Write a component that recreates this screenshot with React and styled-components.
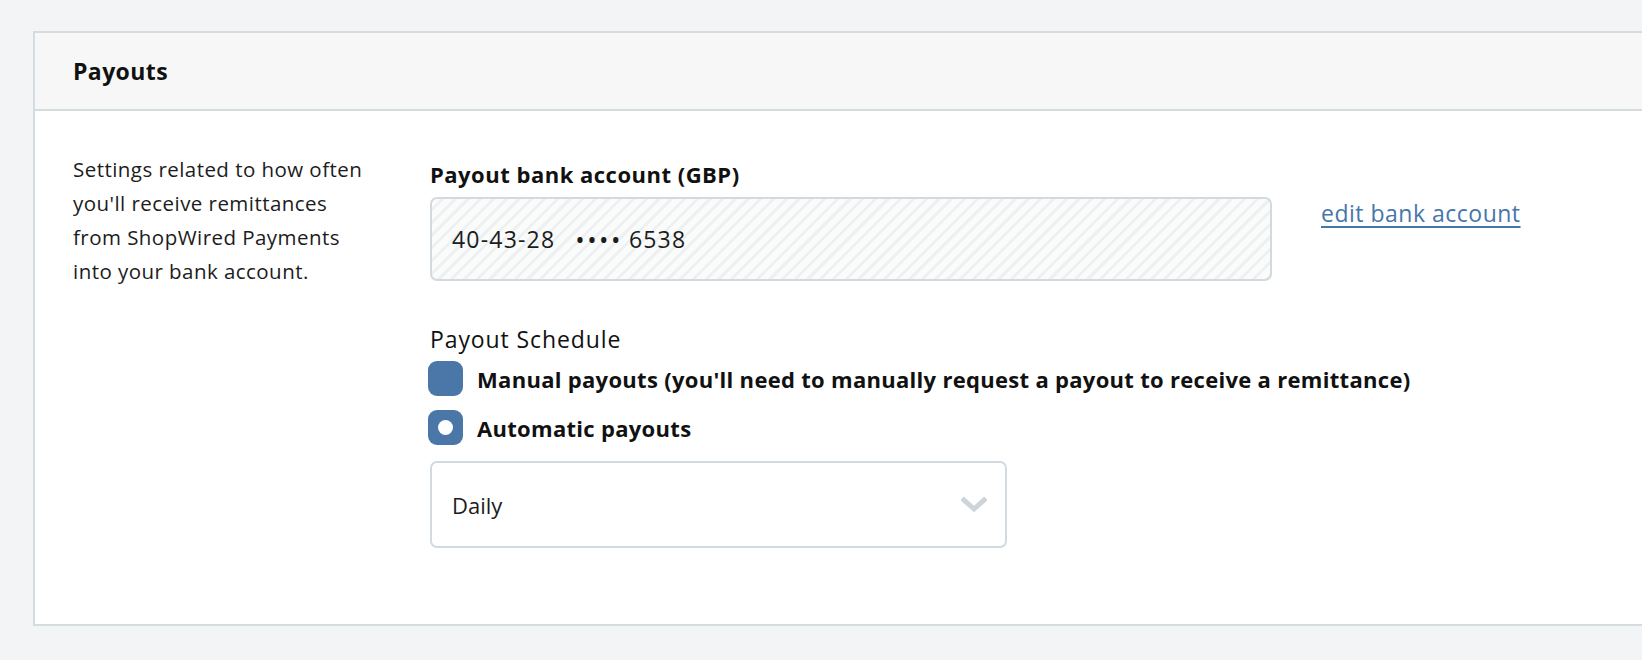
import React from "react";
import styled, { createGlobalStyle } from "styled-components";

const Global = createGlobalStyle`
  html, body { margin: 0; padding: 0; background: #f3f4f6; }
  body { font-family: "Open Sans", Lato, sans-serif; color: #1c1c1c; }
`;

const Page = styled.div`
  padding: 31px 0 0 33px;
  height: 660px;
  box-sizing: border-box;
  overflow: hidden;
`;

const Card = styled.section`
  border: 2px solid #d5dce0;
  border-right: none;
  background: #fff;
  box-sizing: border-box;
`;

const CardHeader = styled.header`
  height: 76px;
  background: #f7f7f7;
  border-bottom: 2px solid #d5dce0;
  display: flex;
  align-items: center;
  padding-left: 38px;
`;

const Title = styled.h2`
  margin: 0;
  font-size: 23px;
  font-weight: 700;
  letter-spacing: 0.4px;
  color: #111;
`;

const CardBody = styled.div`
  display: grid;
  grid-template-columns: 357px 1fr;
  padding: 41px 0 76px 38px;
`;

const Description = styled.p`
  margin: 0;
  width: 302px;
  font-size: 20.5px;
  letter-spacing: 0.45px;
  line-height: 34px;
  color: #1c1c1c;
`;

const Fields = styled.div`
  display: flex;
  flex-direction: column;
  padding-top: 10px;
`;

const Label = styled.div`
  font-size: ${(p) => (p.$bold ? 22 : 23)}px;
  font-weight: ${(p) => (p.$bold ? 700 : 500)};
  letter-spacing: ${(p) => (p.$bold ? 0.5 : 0.9)}px;
  line-height: 24px;
  color: #111;
  margin-bottom: ${(p) => p.$mb || 0}px;
`;

const BankRow = styled.div`
  display: flex;
  align-items: flex-start;
  gap: 49px;
  margin-bottom: 46px;
`;

const ReadOnlyBox = styled.div`
  width: 842px;
  height: 84px;
  box-sizing: border-box;
  border: 2px solid #d3dadf;
  border-radius: 7px;
  display: flex;
  align-items: center;
  padding-left: 20px;
  font-size: 23px;
  letter-spacing: 1.2px;
  color: #1c1c1c;
  background-color: #fafbfb;
  background-image: repeating-linear-gradient(
    135deg,
    #fafbfb 0px,
    #fafbfb 6px,
    #eef0f2 6px,
    #eef0f2 9px
  );
`;

const Dots = styled.span`
  margin: 0 6px 0 20px;
  font-size: 25px;
  letter-spacing: 2.5px;
`;

const EditLink = styled.a`
  margin-top: 4px;
  font-size: 23px;
  letter-spacing: 0.5px;
  line-height: 24px;
  color: #4676a9;
  text-decoration: underline;
  text-decoration-thickness: 2px;
  text-underline-offset: 4px;
  cursor: pointer;
`;

const RadioList = styled.div`
  display: flex;
  flex-direction: column;
  gap: 14px;
  margin-top: 10px;
`;

const RadioRow = styled.label`
  display: flex;
  align-items: center;
  gap: 14px;
  font-size: 22px;
  font-weight: 700;
  letter-spacing: 0.3px;
  color: #111;
`;

const RadioBox = styled.span`
  width: 35px;
  height: 35px;
  border-radius: 9px;
  background: #4a77a8;
  display: flex;
  align-items: center;
  justify-content: center;
  flex-shrink: 0;
  margin-left: -2px;
  &::after {
    content: "";
    display: ${(p) => (p.$checked ? "block" : "none")};
    width: 15px;
    height: 15px;
    border-radius: 50%;
    background: #fff;
  }
`;

const Select = styled.div`
  margin-top: 16px;
  width: 577px;
  height: 87px;
  box-sizing: border-box;
  border: 2px solid #d3dadf;
  border-radius: 7px;
  background: #fff;
  display: flex;
  align-items: center;
  justify-content: space-between;
  padding: 0 18px 0 20px;
  font-size: 22px;
  color: #1c1c1c;
`;

const Chevron = () => (
  <svg width="26" height="18" viewBox="0 0 26 18" aria-hidden="true">
    <path d="M3 4 L13 13 L23 4" fill="none" stroke="#cdd5da" strokeWidth="5" strokeLinecap="square" />
  </svg>
);

export default function App() {
  return (
    <>
      <Global />
      <Page>
        <Card>
          <CardHeader>
            <Title>Payouts</Title>
          </CardHeader>
          <CardBody>
            <Description>
              Settings related to how often you'll receive remittances from ShopWired Payments into your bank account.
            </Description>
            <Fields>
              <Label $bold $mb={11}>Payout bank account (GBP)</Label>
              <BankRow>
                <ReadOnlyBox>
                  40-43-28<Dots>••••</Dots>6538
                </ReadOnlyBox>
                <EditLink>edit bank account</EditLink>
              </BankRow>
              <Label>Payout Schedule</Label>
              <RadioList>
                <RadioRow>
                  <RadioBox />
                  Manual payouts (you'll need to manually request a payout to receive a remittance)
                </RadioRow>
                <RadioRow>
                  <RadioBox $checked />
                  Automatic payouts
                </RadioRow>
              </RadioList>
              <Select>
                Daily
                <Chevron />
              </Select>
            </Fields>
          </CardBody>
        </Card>
      </Page>
    </>
  );
}
